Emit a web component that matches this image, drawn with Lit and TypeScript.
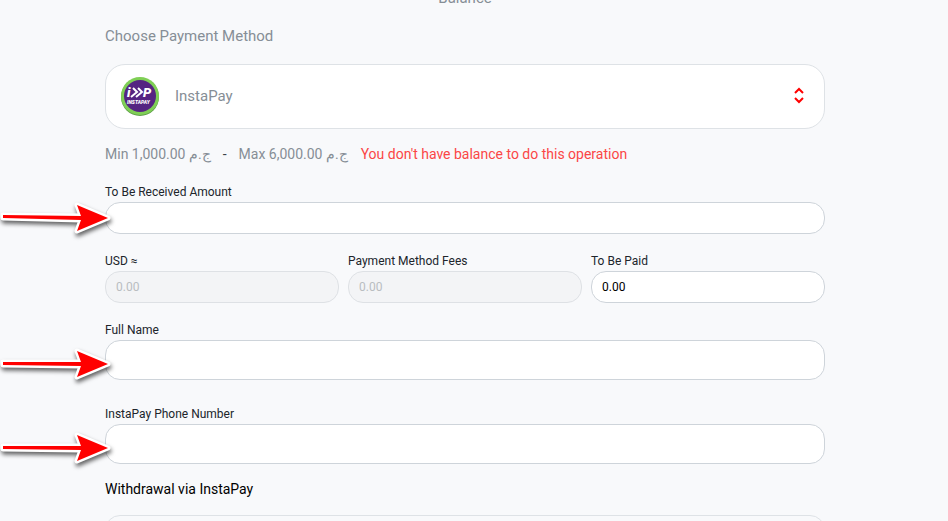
import { LitElement, html, css, svg } from "lit";
import { customElement, property } from "lit/decorators.js";

/** Red pointer with a white outline and a soft shadow. */
@customElement("pointer-arrow")
class PointerArrow extends LitElement {
  @property({ type: Number }) tail = 24;

  static styles = css`
    :host {
      display: block;
      pointer-events: none;
    }
    svg {
      display: block;
      overflow: visible;
      filter: drop-shadow(1px 3px 2px rgba(0, 0, 0, 0.6));
    }
  `;

  render() {
    const t = this.tail;
    const d = `M3 ${t - 2} L81 22 L77 11 L108 24 L77 37 L81 26 L3 ${t + 1} Z`;
    return html`<svg width="112" height="48" viewBox="0 0 112 48" aria-hidden="true">
      ${svg`<path d=${d} fill="#f00" stroke="#fff" stroke-width="5" stroke-linejoin="round" />
      <path d=${d} fill="#f00" />`}
    </svg>`;
  }
}

@customElement("app-root")
class AppRoot extends LitElement {
  static styles = css`
    :host {
      display: block;
      height: 100vh;
      overflow: hidden;
      background: #f8f9fb;
      color: #20252b;
      font-family: Roboto, "Noto Sans", sans-serif;
      font-size: 12px;
      line-height: 20px;
    }
    * {
      box-sizing: border-box;
    }
    .page {
      padding: 0 18px 0 0;
    }
    form {
      display: flex;
      flex-direction: column;
      width: 100%;
      max-width: 720px;
      margin: -14px auto 0;
    }
    .caption,
    .heading {
      font-size: 15px;
      line-height: 24px;
      color: #868e96;
    }
    .caption {
      margin: 0 0 14px;
      text-align: center;
    }
    .heading {
      margin-bottom: 16px;
    }
    .method {
      position: relative;
      height: 65px;
    }
    select {
      display: block;
      width: 100%;
      height: 100%;
      padding: 0 69px 2px;
      border: 1px solid #dee2e6;
      border-radius: 20px;
      background: #fff;
      color: #868e96;
      font: inherit;
      font-size: 15px;
      appearance: none;
    }
    .logo,
    .chevrons {
      position: absolute;
      top: 12px;
      pointer-events: none;
    }
    .logo {
      left: 15px;
    }
    .chevrons {
      right: 20px;
    }
    .word {
      font-family: Roboto, sans-serif;
      font-weight: 900;
      font-style: italic;
      fill: #fff;
    }
    .limits {
      display: flex;
      flex-wrap: wrap;
      gap: 13px;
      margin: 13px 0 16px;
      font-size: 14px;
      line-height: 24px;
      color: #868e96;
    }
    .range {
      display: flex;
      gap: 12px;
    }
    .dash {
      color: #3c4248;
    }
    .error {
      color: #fb4646;
    }
    .field {
      position: relative;
      display: flex;
      flex-direction: column;
      min-width: 0;
    }
    .gap {
      margin-bottom: 17px;
    }
    .wide-gap {
      margin-bottom: 24px;
    }
    .row {
      display: grid;
      grid-template-columns: repeat(3, 1fr);
      gap: 9px;
    }
    input {
      width: 100%;
      height: 32px;
      padding: 0 10px;
      border: 1px solid #ced4da;
      border-radius: 15px;
      background: #fff;
      color: #000;
      font: inherit;
    }
    input.tall {
      height: 40px;
    }
    input:disabled {
      border-color: #dee1e5;
      background: #f3f4f6;
      color: #b9bdc1;
    }
    pointer-arrow {
      position: absolute;
      right: calc(100% - 7px);
      bottom: -8px;
    }
    .note-label {
      margin: 13px 0 14px;
      font-size: 14px;
      line-height: 24px;
      color: #000;
    }
    textarea {
      height: 80px;
      padding: 10px;
      border: 1px solid #dee2e6;
      border-radius: 15px;
      background: #f8f9fb;
      font: inherit;
      resize: none;
    }
  `;

  private logo() {
    return html`<svg class="logo" width="40" height="40" viewBox="0 0 40 40" aria-hidden="true">
      <circle cx="20" cy="21" r="19" fill="#5fa048" />
      <circle cx="20" cy="20" r="19" fill="#7fcf55" />
      <circle cx="20" cy="20" r="16" fill="#552482" />
      <path
        d="M13 12l4 4-6 5M18 12l4 4-6 5"
        fill="none"
        stroke="#fff"
        stroke-width="2"
      />
      <text class="word" y="21" font-size="13"><tspan x="7">i</tspan><tspan x="23">P</tspan></text>
      <text class="word" x="7" y="28" font-size="5">INSTAPAY</text>
    </svg>`;
  }

  render() {
    return html`
      <main class="page">
        <form>
          <p class="caption">Balance</p>
          <label class="heading" for="method">Choose Payment Method</label>
          <div class="method">
            <select id="method">
              <option>InstaPay</option>
            </select>
            ${this.logo()}
            <svg class="chevrons" width="12" height="40" viewBox="0 0 12 40" aria-hidden="true">
              <path
                d="M2 17l4-4 4 4M2 22l4 4 4-4"
                fill="none"
                stroke="#f00"
                stroke-width="2"
              />
            </svg>
          </div>
          <div class="limits">
            <div class="range">
              <span>Min 1,000.00 <bdi>ج.م</bdi></span>
              <span class="dash">-</span>
              <span>Max 6,000.00 <bdi>ج.م</bdi></span>
            </div>
            <span class="error" role="alert">You don't have balance to do this operation</span>
          </div>
          <div class="field gap">
            <label for="received">To Be Received Amount</label>
            <input id="received" type="text" />
            <pointer-arrow tail="23"></pointer-arrow>
          </div>
          <div class="row gap">
            <div class="field">
              <label for="usd">USD ≈</label>
              <input id="usd" type="text" value="0.00" disabled />
            </div>
            <div class="field">
              <label for="fees">Payment Method Fees</label>
              <input id="fees" type="text" value="0.00" disabled />
            </div>
            <div class="field">
              <label for="paid">To Be Paid</label>
              <input id="paid" type="text" value="0.00" />
            </div>
          </div>
          <div class="field wide-gap">
            <label for="name">Full Name</label>
            <input id="name" class="tall" type="text" />
            <pointer-arrow></pointer-arrow>
          </div>
          <div class="field">
            <label for="phone">InstaPay Phone Number</label>
            <input id="phone" class="tall" type="text" />
            <pointer-arrow></pointer-arrow>
          </div>
          <label class="note-label" for="note">Withdrawal via InstaPay</label>
          <textarea id="note"></textarea>
        </form>
      </main>
    `;
  }
}
